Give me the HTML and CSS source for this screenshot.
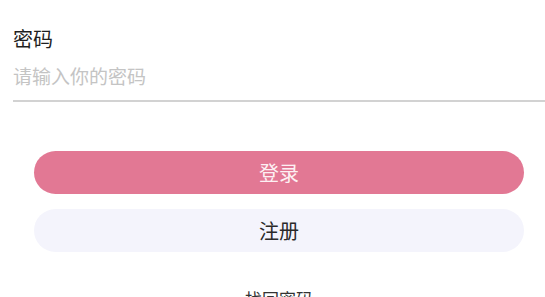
FILE: index.html
```html
<!DOCTYPE html>
<html lang="zh-CN">
<head>
    <meta charset="UTF-8">
    <meta name="viewport" content="width=device-width, initial-scale=1.0">
    <title>登录</title>
    <link rel="stylesheet" href="styles.css">
</head>
<body>
    <div class="login-form">
        <!-- Password field -->
        <div class="field">
            <label class="field-label" for="password">密码</label>
            <input id="password" class="field-input" type="password" placeholder="请输入你的密码">
        </div>

        <div class="actions">
            <button class="btn btn-login">登录</button>
            <button class="btn btn-register">注册</button>
            <a class="forgot-link" href="#">找回密码</a>
        </div>
    </div>
</body>
</html>
```

FILE: styles.css
```css
body {
    margin: 0;
    overflow: hidden;
    background: #ffffff;
    font-family: "Noto Sans CJK SC", "Noto Sans", sans-serif;
}

.login-form {
    padding: 23px 0 0 13px;
}

/* Password field */
.field {
    display: flex;
    flex-direction: column;
}

.field-label {
    font-size: 20px;
    line-height: 32px;
    color: #1f1f1f;
}

.field-input {
    margin-top: 7px;
    padding: 0 0 10px 0;
    border: none;
    border-bottom: 2px solid #d2d2d2;
    outline: none;
    font-family: inherit;
    font-size: 19px;
    line-height: 28px;
    color: #333333;
    background: transparent;
}

.field-input::placeholder {
    color: #c4c4c4;
}

/* Buttons */
.actions {
    display: flex;
    flex-direction: column;
    align-items: stretch;
    gap: 15px;
    padding: 49px 21px 0 21px;
}

.btn {
    height: 43px;
    border: none;
    border-radius: 22px;
    font-family: inherit;
    font-size: 20px;
    cursor: pointer;
}

.btn-login {
    background: #e27894;
    color: #fdf0f3;
}

.btn-register {
    background: #f4f4fc;
    color: #2a2a2a;
}

.forgot-link {
    margin-top: 19px;
    text-align: center;
    font-size: 17px;
    color: #333333;
    text-decoration: none;
}
```
